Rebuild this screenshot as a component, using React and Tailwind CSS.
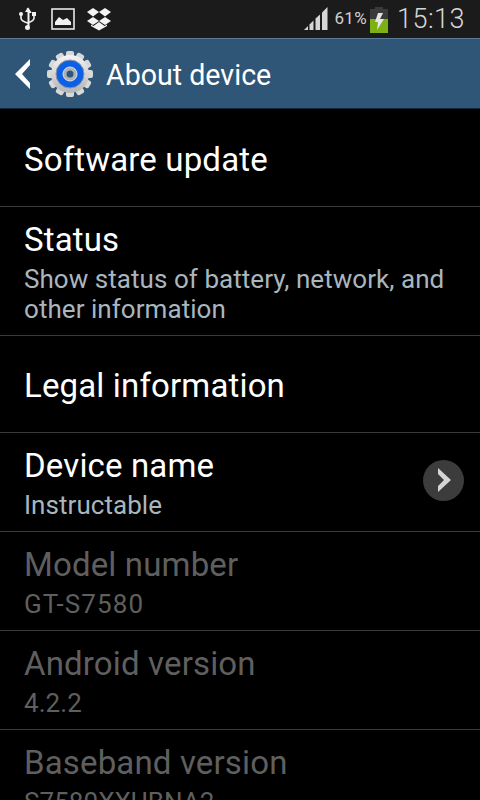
const rows = [
  { title: 'Software update', h: 'h-[98px]', pad: 'pt-[5px]' },
  { title: 'Status', sub: ['Show status of battery, network, and', 'other information'], h: 'h-[129px]', pad: 'pt-[2px]' },
  { title: 'Legal information', h: 'h-[97px]', pad: 'pt-[3px]' },
  { title: 'Device name', sub: ['Instructable'], h: 'h-[99px]', pad: 'pt-[2px]', arrow: true },
  { title: 'Model number', sub: ['GT-S7580'], h: 'h-[99px]', pad: 'pt-[2px]', dim: true, wide: true },
  { title: 'Android version', sub: ['4.2.2'], h: 'h-[99px]', pad: 'pt-[2px]', dim: true },
  { title: 'Baseband version', sub: ['S7580XXUBNA2'], h: 'h-[99px]', pad: 'pt-[2px]', dim: true },
];

const GearIcon = () => {
  const teeth = [0, 30, 60, 90, 120, 150, 180, 210, 240, 270, 300, 330];
  return (
    <svg width="48" height="48" viewBox="0 0 48 48">
      <defs>
        <linearGradient id="gear" x1="0" y1="0" x2="0" y2="1">
          <stop offset="0" stopColor="#f4f4f4" />
          <stop offset="1" stopColor="#b4b4b4" />
        </linearGradient>
      </defs>
      {teeth.map((a) => (
        <rect key={a} x="20" y="1" width="8" height="10" rx="2" fill="#d8d8d8" transform={`rotate(${a} 24 24)`} />
      ))}
      <circle cx="24" cy="24" r="19" fill="url(#gear)" />
      <circle cx="24" cy="24" r="14" fill="#0d5fe6" stroke="#8f969c" strokeWidth="1" />
      <circle cx="24" cy="24" r="7" fill="#aeb2b6" stroke="#dfe2e5" strokeWidth="1" />
      <circle cx="24" cy="24" r="3.5" fill="#2f5577" />
    </svg>
  );
};

const StatusBar = () => (
  <div className="h-[38px] shrink-0 bg-[#1b1b1b] flex items-center pl-[19px] pr-[15px]">
    {/* usb */}
    <svg width="17" height="24" viewBox="0 0 17 24" fill="none" className="mr-[15px]">
      <path d="M8.5 1 L11 5 H9.5 V19" stroke="#f2f2f2" strokeWidth="2" />
      <path d="M8.5 1 L6 5 H11 Z" fill="#f2f2f2" />
      <path d="M2 8 V11 Q2 14 8.5 16 Q15 14 15 11 V8" stroke="#f2f2f2" strokeWidth="1.6" />
      <circle cx="2" cy="7" r="2" fill="#f2f2f2" />
      <rect x="13" y="5" width="4" height="4" fill="#f2f2f2" />
      <circle cx="8.5" cy="20.5" r="2.5" fill="#f2f2f2" />
    </svg>
    {/* picture */}
    <svg width="24" height="22" viewBox="0 0 24 22" fill="none" className="mr-[11px]">
      <rect x="1" y="1" width="22" height="20" stroke="#e8e8e8" strokeWidth="1.6" />
      <path d="M4 17 V14 L8 9 L12 12 L16 10 L20 14 V17 Z" fill="#f2f2f2" />
    </svg>
    {/* dropbox */}
    <svg width="26" height="24" viewBox="0 0 26 24" fill="#f4f4f4">
      <path d="M7 1 L13 5 L7 9.5 L1 5 Z" />
      <path d="M19 1 L25 5 L19 9.5 L13 5 Z" />
      <path d="M7 10 L13 14 L7 18 L1 14 Z" />
      <path d="M19 10 L25 14 L19 18 L13 14 Z" />
      <path d="M13 15 L18.5 19 L21 17.5 V19 L13 23.5 L5 19 V17.5 L7.5 19 Z" />
    </svg>
    <div className="ml-auto flex items-center">
      <svg width="24" height="24" viewBox="0 0 24 24" fill="#d6d6d6" className="mr-[6px] mt-[-1px]">
        <path d="M0 23 L4 19 V23 Z" />
        <path d="M5.5 23 V17.5 L9.5 13.5 V23 Z" />
        <path d="M11.5 23 V11.5 L16 7.5 V23 Z" />
        <path d="M18 23 V5.5 L23.5 0 V23 Z" />
      </svg>
      <span className="text-[17px] text-[#cfcfcf] mr-[3px] tracking-[0.3px]">61%</span>
      <svg width="18" height="26" viewBox="0 0 18 26" className="mr-[9px] mt-[1px]">
        <rect x="5" y="0" width="8" height="2" fill="#3a3a3a" />
        <rect x="0" y="2" width="18" height="10" fill="#3a3a3a" />
        <rect x="0" y="12" width="18" height="14" fill="#7cb013" />
        <path d="M8 6 H13 L10 12 H14 L7 23 L8 15 H5 Z" fill="#e4e4e4" />
      </svg>
      <span className="font-light text-[27px] text-[#d6d6d6] tracking-[0.5px]">15:13</span>
    </div>
  </div>
);

const Row = ({ row }) => (
  <div className={`${row.h} ${row.pad} shrink-0 border-b border-[#3a3a3a] pl-[24px] pr-[16px] flex items-center justify-between`}>
    <div className="min-w-0">
      <div className={`text-[33px] leading-[38px] tracking-[0.15px] whitespace-nowrap ${row.dim ? 'text-[#5f5f5f]' : 'text-white'}`}>{row.title}</div>
      {row.sub && (
        <div className={`text-[26px] leading-[30px] mt-[5px] whitespace-nowrap ${row.dim ? 'text-[#5f5f5f]' : 'text-[#a9b6be]'} ${row.wide ? 'tracking-[1.1px]' : 'tracking-[0.05px]'}`}>
          {row.sub.map((s) => <div key={s}>{s}</div>)}
        </div>
      )}
    </div>
    {row.arrow && (
      <div className="w-[41px] h-[41px] mt-[-6px] rounded-full bg-[#3c3c3c] flex items-center justify-center">
        <svg width="14" height="24" viewBox="0 0 14 24">
          <path d="M1 0 L14 12 L1 24 V18 L7 12 L1 6 Z" fill="#d4d4d4" />
        </svg>
      </div>
    )}
  </div>
);

export default function App() {
  return (
    <div className="w-[480px] h-[800px] overflow-hidden bg-black font-['Roboto',sans-serif] flex flex-col">
      <StatusBar />
      <div className="h-[71px] shrink-0 bg-[#2f5577] border-t border-[#5a7c99] border-b-[#12283a] border-b flex items-center pl-[15px]">
        <svg width="16" height="30" viewBox="0 0 16 30" className="mr-[15px]">
          <path d="M15 0 V6 L7 15 L15 24 V30 L0 15 Z" fill="#ffffff" />
        </svg>
        <GearIcon />
        <span className="text-[28.6px] text-white ml-[12px] pt-[4px]">About device</span>
      </div>
      {rows.map((row) => <Row key={row.title} row={row} />)}
    </div>
  );
}
